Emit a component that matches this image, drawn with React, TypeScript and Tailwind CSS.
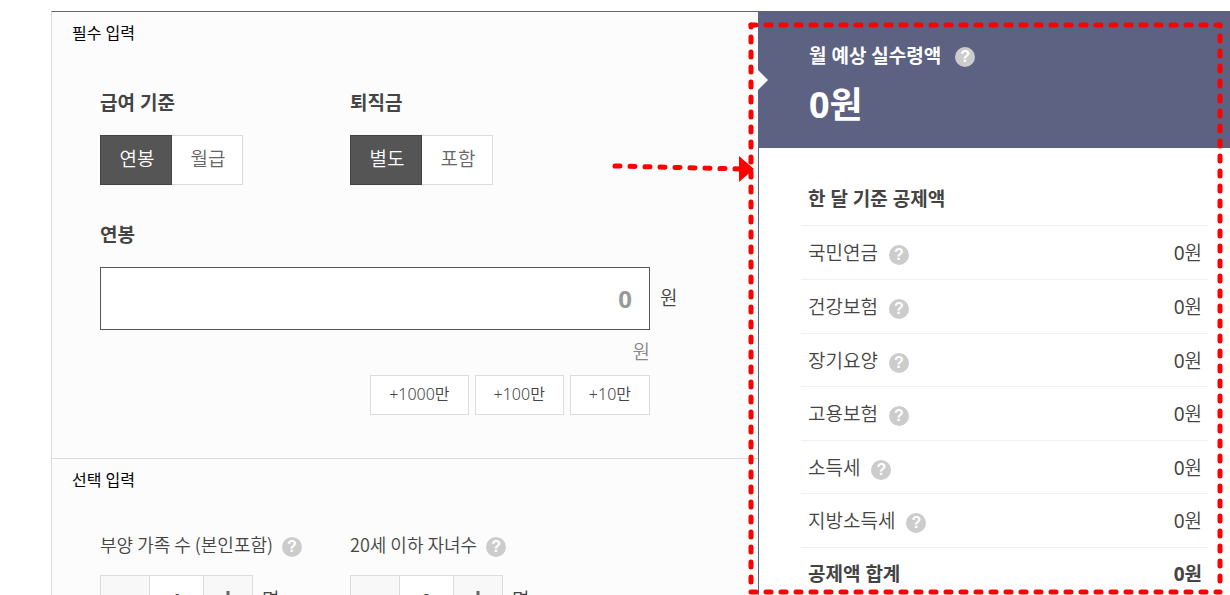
import React, { useState } from "react";
import clsx from "clsx";

const deductions = [
  { id: "pension", name: "국민연금", amount: 0 },
  { id: "health", name: "건강보험", amount: 0 },
  { id: "care", name: "장기요양", amount: 0 },
  { id: "employment", name: "고용보험", amount: 0 },
  { id: "incomeTax", name: "소득세", amount: 0 },
  { id: "localTax", name: "지방소득세", amount: 0 },
];

const quickAmounts = [
  { label: "+1000만", value: 10000000 },
  { label: "+100만", value: 1000000 },
  { label: "+10만", value: 100000 },
];

const HelpButton: React.FC<{ topic: string }> = ({ topic }) => (
  <button
    type="button"
    aria-label={`${topic} 도움말`}
    className="flex h-5 w-5 shrink-0 items-center justify-center rounded-full bg-[#cccccc] font-['Liberation_Sans',sans-serif] text-base leading-5 font-bold text-white"
  >
    ?
  </button>
);

interface ToggleProps {
  label: string;
  options: string[];
}

const Toggle: React.FC<ToggleProps> = ({ label, options }) => {
  const [selected, setSelected] = useState(options[0]);

  return (
    <div className="w-[250px]">
      <h3 className="text-[19px] leading-7 font-bold">{label}</h3>
      <div className="mt-[18px] flex" role="group" aria-label={label}>
        {options.map((option) => (
          <button
            key={option}
            type="button"
            aria-pressed={option === selected}
            onClick={() => setSelected(option)}
            className={clsx(
              "h-[50px] border pb-[2px] pl-[2px] text-[19px] font-[350] first:w-[72px] last:w-[71px]",
              option === selected
                ? "border-[#444444] bg-[#555555] text-white"
                : "border-[#dcdcdc] bg-white text-[#666666] first:border-r-0 last:border-l-0"
            )}
          >
            {option}
          </button>
        ))}
      </div>
    </div>
  );
};

interface StepperProps {
  id: string;
  label: string;
  initial: number;
}

const Stepper: React.FC<StepperProps> = ({ id, label, initial }) => {
  const [count, setCount] = useState(initial);

  return (
    <div className="w-[250px]">
      <div className="flex items-center gap-[9px]">
        <label
          htmlFor={id}
          className="pb-[2px] font-['Noto_Sans_CJK_KR',sans-serif] text-lg leading-7 font-[350] whitespace-nowrap"
        >
          {label}
        </label>
        <div className="pt-1">
          <HelpButton topic={label} />
        </div>
      </div>
      <div className="mt-[15px] flex items-center">
        <div className="flex h-[50px] border border-[#dcdcdc]">
          <button
            type="button"
            aria-label="감소"
            onClick={() => setCount(Math.max(0, count - 1))}
            className="flex w-12 items-center justify-center bg-[#f8f8f8]"
          >
            <span className="h-[3px] w-4 bg-[#666666]" />
          </button>
          <input
            id={id}
            value={count}
            readOnly
            className="w-[55px] border-x border-[#dcdcdc] bg-white text-center text-lg font-bold outline-none"
          />
          <button
            type="button"
            aria-label="증가"
            onClick={() => setCount(count + 1)}
            className="flex w-12 items-center justify-center bg-[#f8f8f8]"
          >
            <svg width="18" height="18" viewBox="0 0 18 18" stroke="#666666" strokeWidth="3">
              <path d="M9 0v18M0 9h18" />
            </svg>
          </button>
        </div>
        <span className="ml-[9px] text-[19px] leading-7 font-[350]">명</span>
      </div>
    </div>
  );
};

// Dashed frame around the result panel, with the arrow that leads to it
const Highlight = () => (
  <svg
    className="pointer-events-none absolute top-0 -left-[159px]"
    width="630"
    height="595"
    viewBox="600 11 630 595"
    fill="none"
    stroke="#ff0000"
    strokeWidth="5"
    strokeLinecap="round"
    strokeDasharray="5 10"
    aria-hidden="true"
  >
    <path d="M751 25H1220" />
    <path d="M751 592H1220" />
    <path d="M751 25V590" strokeDashoffset="3" />
    <path d="M1220 25V590" strokeDashoffset="4" />
    <path d="M615 166L742 169" />
    <path d="M739 156L754 169L739 182Z" fill="#ff0000" stroke="none" />
  </svg>
);

const SalaryForm = () => {
  const [salary, setSalary] = useState(0);

  return (
    <form className="min-w-0 flex-1 border-t border-l border-t-[#666666] border-l-[#dcdcdc] bg-[#fcfcfc]">
      <section className="border-b border-[#dcdcdc] pt-[9px] pb-[43px]">
        <h2 className="pl-5 text-base leading-6 text-black">필수 입력</h2>
        <div className="mt-11 pr-20 pl-12">
          <div className="flex">
            <Toggle label="급여 기준" options={["연봉", "월급"]} />
            <Toggle label="퇴직금" options={["별도", "포함"]} />
          </div>
          <label htmlFor="salary" className="mt-9 block text-[19px] leading-7 font-bold">
            연봉
          </label>
          <div className="mt-[18px] flex items-center gap-[10px]">
            <input
              id="salary"
              inputMode="numeric"
              value={salary.toLocaleString()}
              onChange={(e) => setSalary(Number(e.target.value.replace(/\D/g, "")))}
              className="h-[63px] min-w-0 flex-1 border border-[#555555] bg-white px-[17px] text-right text-2xl font-bold text-[#999999] outline-none"
            />
            <span className="w-[18px] pb-[2px] text-[19px] leading-7 font-[350]">원</span>
          </div>
          <div className="pr-7">
            <p className="mt-2 text-right text-[19px] leading-7 font-[350] text-[#888888]">원</p>
            <div className="mt-[9px] flex justify-end gap-[6px]">
              {quickAmounts.map((item) => (
                <button
                  key={item.label}
                  type="button"
                  onClick={() => setSalary(salary + item.value)}
                  className="h-10 border border-[#dcdcdc] bg-white px-[18px] pb-[2px] text-base font-[350]"
                >
                  {item.label}
                </button>
              ))}
            </div>
          </div>
        </div>
      </section>

      <section className="pt-[9px] pb-10">
        <h2 className="pl-5 text-base leading-6 text-black">선택 입력</h2>
        <div className="mt-[38px] flex pl-12">
          <Stepper id="family" label="부양 가족 수 (본인포함)" initial={1} />
          <Stepper id="children" label="20세 이하 자녀수" initial={0} />
        </div>
      </section>
    </form>
  );
};

const ResultPanel = () => (
  <aside className="relative w-[472px] shrink-0 border-l border-[#5e6282] bg-white">
    <header className="bg-[#5e6282] pt-[31px] pb-[19px] pl-[50px] text-white">
      <div className="flex items-center gap-[14px]">
        <h2 className="text-[19px] leading-7 font-bold">월 예상 실수령액</h2>
        <div className="pt-[2px]">
          <HelpButton topic="월 예상 실수령액" />
        </div>
      </div>
      <p className="mt-[11px] text-4xl leading-[48px] font-bold">0원</p>
    </header>
    <svg className="absolute top-[59px] -left-px" width="10" height="20" viewBox="0 0 10 20" aria-hidden="true">
      <path d="M0 0L10 10L0 20Z" fill="#fcfcfc" />
    </svg>

    <div className="mt-[37px] mr-[22px] ml-[42px]">
      <h3 className="border-b border-[#f0f0f0] pb-3 pl-[7px] text-[19px] leading-7 font-bold">한 달 기준 공제액</h3>
      <table className="w-full text-[19px] leading-7">
        <tbody>
          {deductions.map((item) => (
            <tr key={item.id} className="border-b border-[#f0f0f0] odd:h-[53px] even:h-[54px]">
              <th scope="row" className="pt-[2px] pl-[7px] text-left font-[350]">
                <div className="flex items-center gap-[11px]">
                  {item.name}
                  <div className="pt-1">
                    <HelpButton topic={item.name} />
                  </div>
                </div>
              </th>
              <td className="pt-[2px] pr-[6px] text-right font-[350]">
                <span className="font-normal">{item.amount}</span>원
              </td>
            </tr>
          ))}
          <tr className="h-[54px] font-bold">
            <th scope="row" className="pl-[7px] text-left">
              공제액 합계
            </th>
            <td className="pr-[6px] text-right">0원</td>
          </tr>
        </tbody>
      </table>
    </div>

    <Highlight />
  </aside>
);

export default function App() {
  return (
    <main className="flex min-h-screen overflow-hidden bg-white pt-[11px] pl-[51px] font-['Noto_Sans','Noto_Sans_CJK_KR',sans-serif] text-[#444444]">
      <SalaryForm />
      <ResultPanel />
    </main>
  );
}
